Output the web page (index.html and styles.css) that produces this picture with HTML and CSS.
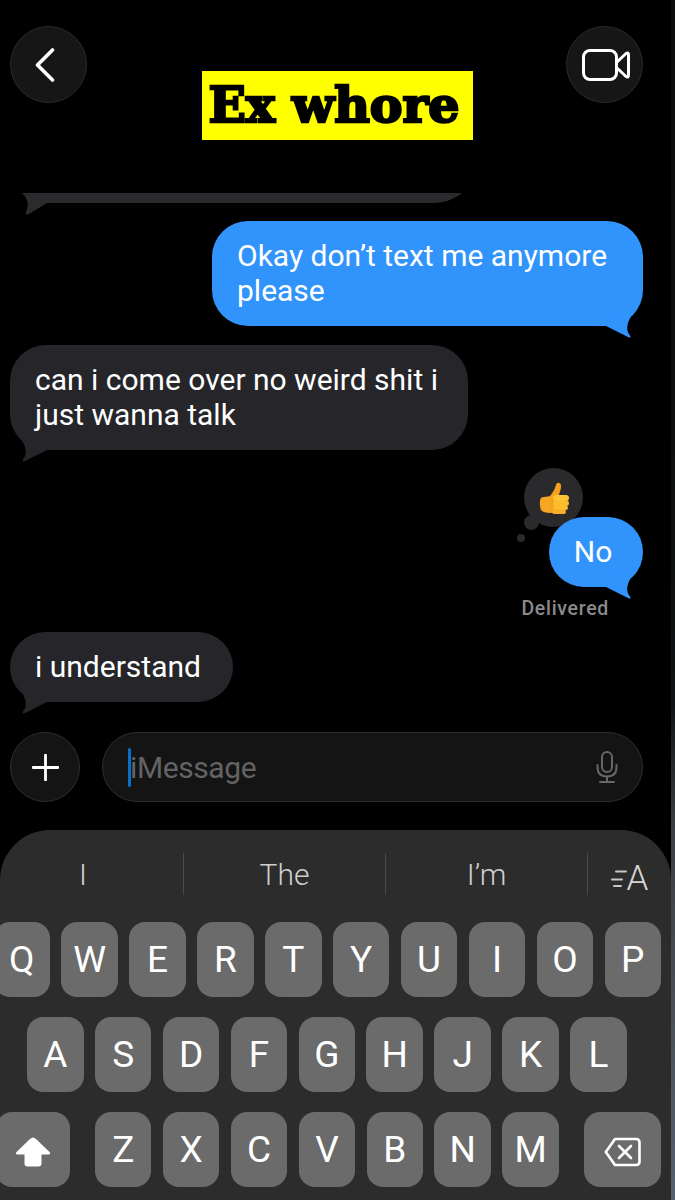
FILE: index.html
```html
<!DOCTYPE html>
<html>
<head>
    <title>Messages</title>
    <link rel="stylesheet" href="styles.css">
</head>
<body>
    <div class="screen">
        <div class="phone">
            <div class="header">
                <div class="round-btn">
                    <svg class="icon-back" viewBox="0 0 20 34"><path d="M17.5 2 L2.5 17 L17.5 32"/></svg>
                </div>
                <div class="title">Ex whore</div>
                <div class="round-btn">
                    <svg class="icon-video" viewBox="0 0 48 32">
                        <rect x="1.5" y="1.5" width="33" height="29" rx="6.5"/>
                        <path d="M35 13 L44 4.5 Q46.5 3 46.5 6 V26 Q46.5 29 44 27.5 L35 19"/>
                    </svg>
                </div>
            </div>

            <div class="thread">
                <svg class="cut-bubble" viewBox="0 0 440 22"><path d="M0 0 H440 Q428 10 410 10 H25 L7 21 Q3 23 4 19 Q9 8 0 0 Z"/></svg>

                <div class="bubble blue okay">
                    Okay don’t text me anymore please
                    <svg class="tail" viewBox="0 0 40 34"><path d="M3 22 L26 33.5 Q28.5 34 27 31.5 C21 25 25 14 35 3 L15 3 Z"/></svg>
                </div>

                <div class="bubble gray over">
                    can i come over no weird shit i just wanna talk
                    <svg class="tail" viewBox="0 0 40 34"><path d="M3 22 L26 33.5 Q28.5 34 27 31.5 C21 25 25 14 35 3 L15 3 Z"/></svg>
                </div>

                <div class="bubble blue no">
                    <div class="reaction">
                        <span class="dot-big"></span>
                        <span class="dot-small"></span>
                        <svg class="thumb" viewBox="0 0 30 32">
                            <path fill="#f79f1f" d="M11 14 C14 10 16 7 17 3 C17.6 0 21.6 0 22 3.4 C22.4 7 20.6 10 20 13 L24 14 V30 L10 31 Z"/>
                            <path fill="#f5a623" d="M1 19 Q1 15 5 15 L12 14 V31 Q4 31 2 28 Q0.5 25 1 19 Z"/>
                            <rect fill="#fdc532" x="14" y="13" width="16" height="6" rx="3"/>
                            <rect fill="#fcbc2c" x="14" y="18.5" width="16" height="5.5" rx="2.8"/>
                            <rect fill="#fcbc2c" x="14" y="23.5" width="15" height="4.5" rx="2.3"/>
                            <rect fill="#f9b028" x="13" y="27.5" width="14" height="4.5" rx="2.2"/>
                        </svg>
                    </div>
                    No
                    <svg class="tail" viewBox="0 0 40 34"><path d="M3 22 L26 33.5 Q28.5 34 27 31.5 C21 25 25 14 35 3 L15 3 Z"/></svg>
                </div>
                <div class="delivered">Delivered</div>

                <div class="bubble gray understand">
                    i understand
                    <svg class="tail" viewBox="0 0 40 34"><path d="M3 22 L26 33.5 Q28.5 34 27 31.5 C21 25 25 14 35 3 L15 3 Z"/></svg>
                </div>
            </div>

            <div class="compose">
                <div class="plus-btn">
                    <svg class="icon-plus" viewBox="0 0 27 27"><path d="M13.5 1 V26 M1 13.5 H26"/></svg>
                </div>
                <div class="input">
                    <span class="cursor"></span>
                    <span class="placeholder">iMessage</span>
                    <svg class="icon-mic" viewBox="0 0 22 32">
                        <rect x="6" y="1" width="10" height="20" rx="5"/>
                        <path d="M1.5 14 V16 Q1.5 25.5 11 25.5 Q20.5 25.5 20.5 16 V14 M11 25.5 V31 M4 31 H18"/>
                    </svg>
                </div>
            </div>

            <div class="keyboard">
                <div class="suggestions">
                    <div class="suggestion first">I</div>
                    <div class="suggestion">The</div>
                    <div class="suggestion">I’m</div>
                    <div class="suggestion last">
                        <svg class="icon-lines" viewBox="0 0 16 18"><path d="M5 1.5 H15 M1 9.5 H11 M3 16 H10"/></svg>
                        <span>A</span>
                    </div>
                </div>

                <div class="key-row row-top">
                    <div class="key">Q</div><div class="key">W</div><div class="key">E</div><div class="key">R</div><div class="key">T</div>
                    <div class="key">Y</div><div class="key">U</div><div class="key">I</div><div class="key">O</div><div class="key">P</div>
                </div>
                <div class="key-row row-mid">
                    <div class="key">A</div><div class="key">S</div><div class="key">D</div><div class="key">F</div><div class="key">G</div>
                    <div class="key">H</div><div class="key">J</div><div class="key">K</div><div class="key">L</div>
                </div>
                <div class="key-row row-low">
                    <div class="key shift">
                        <svg class="icon-shift" viewBox="0 0 36 31"><path d="M18 1.5 Q16.5 1.5 15 3 L1.5 16 Q0 18 2.5 18.5 H9.5 V27.5 Q9.5 30.5 12.5 30.5 H23.5 Q26.5 30.5 26.5 27.5 V18.5 H33.5 Q36 18 34.5 16 L21 3 Q19.5 1.5 18 1.5 Z"/></svg>
                    </div>
                    <div class="key">Z</div><div class="key">X</div><div class="key">C</div><div class="key">V</div>
                    <div class="key">B</div><div class="key">N</div><div class="key">M</div>
                    <div class="key delete">
                        <svg class="icon-delete" viewBox="0 0 37 30">
                            <path d="M11 2 H32 Q35.5 2 35.5 5.5 V24.5 Q35.5 28 32 28 H11 L1.8 15 Z"/>
                            <path d="M15 9 L27 21 M27 9 L15 21"/>
                        </svg>
                    </div>
                </div>
            </div>
        </div>
        <div class="edge"></div>
    </div>
</body>
</html>
```

FILE: styles.css
```css
body {
    margin: 0;
    background: #000;
    font-family: Roboto, "Liberation Sans", sans-serif;
    color: #fff;
}

.screen {
    display: flex;
    width: 675px;
    height: 1200px;
    overflow: hidden;
}

.phone {
    width: 671px;
    display: flex;
    flex-direction: column;
}

/* Thin strip on the right side of the capture */
.edge {
    width: 4px;
    background: linear-gradient(#0c0c0c 0, #101112 700px, #3c3f43 830px, #56616f 1200px);
}

/* Header */
.header {
    display: flex;
    align-items: flex-start;
    padding: 26px 28px 0 10px;
}

.round-btn {
    width: 77px;
    height: 77px;
    box-sizing: border-box;
    border-radius: 50%;
    background: #161616;
    border: 1px solid #2a2a2a;
    display: flex;
    align-items: center;
    justify-content: center;
}

.icon-back {
    width: 20px;
    height: 34px;
    margin-right: 7px;
    fill: none;
    stroke: #fff;
    stroke-width: 3.6;
    stroke-linecap: round;
    stroke-linejoin: round;
}

.icon-video {
    width: 48px;
    height: 32px;
    margin-left: 2px;
    fill: none;
    stroke: #fff;
    stroke-width: 3;
    stroke-linejoin: round;
}

.title {
    margin: 45px auto 0 115px;
    width: 271px;
    height: 69px;
    box-sizing: border-box;
    padding-right: 7px;
    background: #ffff00;
    color: #000;
    font-family: "DejaVu Serif", serif;
    font-weight: bold;
    font-size: 49px;
    line-height: 69px;
    text-align: center;
    white-space: nowrap;
    -webkit-text-stroke: 2.5px #000;
}

/* Messages */
.thread {
    display: flex;
    flex-direction: column;
    height: 592px;
    padding: 0 28px 0 10px;
    align-items: flex-start;
}

.cut-bubble {
    width: 440px;
    height: 22px;
    margin: 53px 0 0 12px;
    fill: #2b2b2e;
    flex: none;
}

.bubble {
    position: relative;
    box-sizing: border-box;
    padding: 17px 25px 18px;
    border-radius: 36px;
    font-size: 30px;
    line-height: 35px;
}

.bubble.blue {
    background: #3193fc;
    align-self: flex-end;
}

.bubble.gray {
    background: #26262a;
}

.tail {
    position: absolute;
    bottom: -12px;
    right: 0;
    width: 40px;
    height: 34px;
    fill: #3193fc;
}

.gray .tail {
    right: auto;
    left: 0;
    transform: scaleX(-1);
    fill: #26262a;
}

.okay {
    width: 431px;
    margin-top: 6px;
}

.over {
    width: 458px;
    margin-top: 19px;
}

.no {
    width: 94px;
    margin-top: 67px;
    text-align: center;
    padding-left: 0;
    padding-right: 6px;
}

.understand {
    width: 223px;
    margin-top: 12px;
}

/* Tapback on the "No" bubble */
.reaction {
    position: absolute;
    left: -25px;
    top: -49px;
    width: 59px;
    height: 59px;
    border-radius: 50%;
    background: #2a2a2c;
    display: flex;
    align-items: center;
    justify-content: center;
    z-index: -1;
}

.dot-big {
    position: absolute;
    left: 0;
    top: 47px;
    width: 15px;
    height: 15px;
    border-radius: 50%;
    background: #2a2a2c;
}

.dot-small {
    position: absolute;
    left: -7px;
    top: 66px;
    width: 8px;
    height: 8px;
    border-radius: 50%;
    background: #2a2a2c;
}

.thumb {
    width: 30px;
    height: 32px;
}

.delivered {
    align-self: flex-end;
    margin: 11px 34px 0 0;
    color: #8a8a8e;
    font-size: 19.5px;
    font-weight: 500;
    line-height: 22px;
    letter-spacing: 0.7px;
}

/* Compose bar */
.compose {
    display: flex;
    gap: 22px;
    padding: 0 28px 0 10px;
}

.plus-btn {
    width: 70px;
    height: 70px;
    box-sizing: border-box;
    flex: none;
    border-radius: 50%;
    background: #141414;
    border: 1px solid #2e2e2e;
    display: flex;
    align-items: center;
    justify-content: center;
}

.icon-plus {
    width: 27px;
    height: 27px;
    fill: none;
    stroke: #fff;
    stroke-width: 2.8;
    stroke-linecap: round;
}

.input {
    flex: 1;
    height: 70px;
    box-sizing: border-box;
    border-radius: 35px;
    background: #141414;
    border: 1px solid #2e2e2e;
    display: flex;
    align-items: center;
    padding: 0 24px 0 25px;
}

.cursor {
    width: 3px;
    height: 39px;
    border-radius: 2px;
    background: #0a6fc2;
    flex: none;
}

.placeholder {
    flex: 1;
    margin-left: -1px;
    font-size: 30px;
    letter-spacing: -0.4px;
    color: #636365;
}

.icon-mic {
    width: 22px;
    height: 32px;
    fill: none;
    stroke: #666;
    stroke-width: 2;
    stroke-linecap: round;
}

/* Keyboard */
.keyboard {
    flex: 1;
    margin-top: 28px;
    padding-top: 23px;
    background: #2c2c2c;
    border-radius: 50px 50px 0 0;
    overflow: hidden;
}

.suggestions {
    display: flex;
    height: 42px;
    margin-bottom: 27px;
}

.suggestion {
    width: 202px;
    flex: none;
    box-sizing: border-box;
    display: flex;
    align-items: center;
    justify-content: center;
    border-right: 1px solid #4a4a4a;
    color: #cfcfcf;
    font-size: 30px;
    font-weight: 300;
}

.suggestion.first {
    width: 184px;
    padding-right: 17px;
}

.suggestion.last {
    flex: 1;
    width: auto;
    border-right: none;
    align-items: flex-end;
    font-size: 35px;
    line-height: 32px;
    color: #d4d4d4;
}

.icon-lines {
    width: 16px;
    height: 18px;
    margin-bottom: 7px;
    fill: none;
    stroke: #c8c8c8;
    stroke-width: 2;
    stroke-linecap: round;
}

.key-row {
    display: flex;
    gap: 11.4px;
    margin-bottom: 20px;
}

.key {
    width: 56.5px;
    height: 75px;
    flex: none;
    border-radius: 16px;
    background: #6b6b6b;
    display: flex;
    align-items: center;
    justify-content: center;
    font-size: 37px;
    color: #fff;
}

.row-top {
    margin-left: -6.5px;
}

.row-mid {
    margin-left: 27px;
}

.row-low {
    margin-left: -4px;
}

.shift {
    width: 74px;
    margin-right: 13.6px;
}

.delete {
    width: 77px;
    margin-left: 13.6px;
}

.icon-shift {
    width: 36px;
    height: 31px;
    fill: #fff;
    margin-top: 4px;
}

.icon-delete {
    width: 37px;
    height: 30px;
    fill: none;
    stroke: #fff;
    stroke-width: 2.6;
    stroke-linejoin: round;
    stroke-linecap: round;
    margin-top: 4px;
}
```
